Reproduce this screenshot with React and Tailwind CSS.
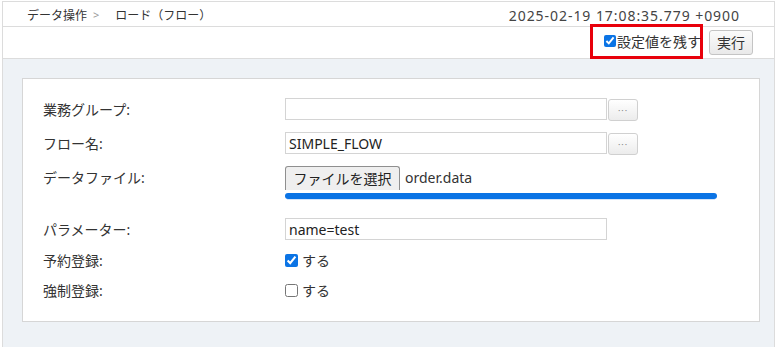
import React, { useState } from 'react'

const font = { fontFamily: '"Noto Sans", "Noto Sans CJK JP", sans-serif' }

const DotsButton = () => (
  <button className="ml-[1px] mt-[1px] h-[22px] w-[30px] rounded-[3px] border border-[#d0d0d0] bg-gradient-to-b from-[#ffffff] to-[#ececec] text-[9px] leading-none tracking-[1px] text-[#8a8a8a]">
    ···
  </button>
)

const Row = ({ label, className = '', children }) => (
  <div className={`flex items-center ${className}`}>
    <div className="w-[242px] shrink-0 text-[14px] text-[#333]">{label}</div>
    {children}
  </div>
)

export default function App() {
  const [keep, setKeep] = useState(true)
  const [reserve, setReserve] = useState(true)
  const [force, setForce] = useState(false)

  return (
    <div className="h-[347px] w-[781px] overflow-hidden bg-white pt-[1px]" style={font}>
      <div className="ml-[2px] flex h-[346px] w-[773px] flex-col border-x border-t border-[#dcdcdc]">
        {/* header */}
        <div className="flex h-[25px] shrink-0 items-center justify-between border-b border-[#dcdcdc] pl-[24px] pr-[34px] pt-[3px]">
          <div className="flex items-center text-[12px] text-[#333]">
            <span>データ操作</span>
            <span className="ml-[6px] mr-[16px] text-[11px] text-[#999]">&gt;</span>
            <span>ロード（フロー）</span>
          </div>
          <div className="text-[14px] tracking-[0.95px] text-[#444]">2025-02-19 17:08:35.779 +0900</div>
        </div>

        {/* toolbar */}
        <div className="flex h-[32px] shrink-0 items-center justify-end border-b border-[#dcdcdc] pr-[21px]">
          <label className="relative z-10 -mt-[3px] flex h-[35px] w-[113px] items-center border-[3px] border-[#e8000b] pl-[11px] text-[14px] text-[#333]">
            <input
              type="checkbox"
              checked={keep}
              onChange={(e) => setKeep(e.target.checked)}
              className="h-[12px] w-[12px] accent-[#0b74e5]"
            />
            <span className="ml-[1px] whitespace-nowrap">設定値を残す</span>
          </label>
          <button className="ml-[6px] h-[25px] w-[44px] rounded-[3px] border border-[#c4c4c4] bg-gradient-to-b from-[#fbfbfb] to-[#e9e9e9] text-[14px] text-[#333]">
            実行
          </button>
        </div>

        {/* body */}
        <div className="flex-1 bg-[#eef2f6] pl-[19px] pt-[19px]">
          <div className="h-[244px] w-[738px] border border-[#d6d6d6] bg-white pl-[20px] pt-[19px]">
            <Row label="業務グループ:" className="h-[23px]">
              <input className="h-[22px] w-[322px] self-start border border-[#d4d4d4] px-[3px] text-[14px] text-[#222] outline-none" />
              <DotsButton />
            </Row>
            <Row label="フロー名:" className="mt-[11px] h-[23px]">
              <input
                defaultValue="SIMPLE_FLOW"
                className="h-[22px] w-[322px] self-start border border-[#d4d4d4] px-[3px] text-[14px] text-[#222] outline-none"
              />
              <DotsButton />
            </Row>
            <div className="mt-[11px]">
              <Row label="データファイル:" className="h-[23px]">
                <button className="h-[24px] w-[115px] self-start rounded-t-[3px] border border-b-0 border-[#8f8f8f] bg-[#efefef] text-[14px] text-[#222]">
                  ファイルを選択
                </button>
                <span className="ml-[5px] text-[14px] text-[#333]">order.data</span>
              </Row>
              <div className="ml-[242px] mt-[4px] w-[432px]">
                <div className="h-[6px] rounded-full bg-[#0b74e5]" />
                <div className="mx-[2px] h-[1px] bg-[#d4e5fb]" />
              </div>
            </div>
            <Row label="パラメーター:" className="mt-[18px] h-[22px]">
              <input
                defaultValue="name=test"
                className="h-[22px] w-[322px] border border-[#d4d4d4] px-[3px] text-[14px] text-[#222] outline-none"
              />
            </Row>
            <Row label="予約登録:" className="mt-[10px] h-[20px]">
              <label className="flex items-center text-[14px] text-[#333]">
                <input
                  type="checkbox"
                  checked={reserve}
                  onChange={(e) => setReserve(e.target.checked)}
                  className="h-[13px] w-[13px] accent-[#0b74e5]"
                />
                <span className="ml-[4px]">する</span>
              </label>
            </Row>
            <Row label="強制登録:" className="mt-[10px] h-[20px]">
              <label className="flex items-center text-[14px] text-[#333]">
                <input
                  type="checkbox"
                  checked={force}
                  onChange={(e) => setForce(e.target.checked)}
                  className="h-[13px] w-[13px] accent-[#0b74e5]"
                />
                <span className="ml-[4px]">する</span>
              </label>
            </Row>
          </div>
        </div>
      </div>
    </div>
  )
}
